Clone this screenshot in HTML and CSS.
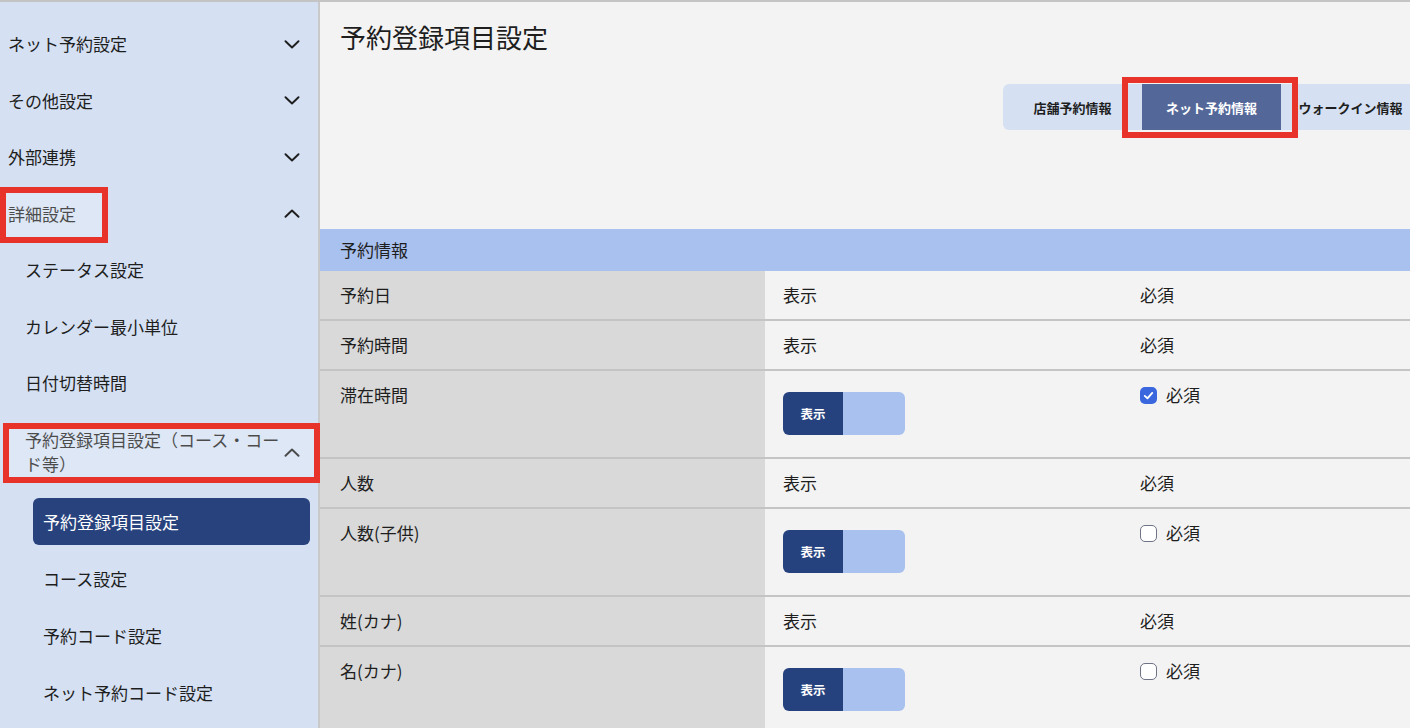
FILE: index.html
```html
<!DOCTYPE html>
<html lang="ja">
<head>
<meta charset="utf-8">
<title>予約登録項目設定</title>
<link rel="stylesheet" href="styles.css">
</head>
<body>
<div class="page">
  <aside class="sidebar">
    <div class="nav-item top"><span class="nav-text">ネット予約設定</span><svg class="chev" viewBox="0 0 16 9"><polyline points="1.5,1.2 8,7.5 14.5,1.2"/></svg></div>
    <div class="nav-item top"><span class="nav-text">その他設定</span><svg class="chev" viewBox="0 0 16 9"><polyline points="1.5,1.2 8,7.5 14.5,1.2"/></svg></div>
    <div class="nav-item top"><span class="nav-text">外部連携</span><svg class="chev" viewBox="0 0 16 9"><polyline points="1.5,1.2 8,7.5 14.5,1.2"/></svg></div>
    <div class="nav-item top"><span class="nav-text">詳細設定</span><svg class="chev" viewBox="0 0 16 9"><polyline points="1.5,7.8 8,1.5 14.5,7.8"/></svg></div>
    <div class="nav-item sub"><span class="nav-text">ステータス設定</span></div>
    <div class="nav-item sub"><span class="nav-text">カレンダー最小単位</span></div>
    <div class="nav-item sub"><span class="nav-text">日付切替時間</span></div>
    <div class="nav-item sub"><span class="nav-text">予約登録項目設定（コース・コード等）</span><svg class="chev" viewBox="0 0 16 9"><polyline points="1.5,7.8 8,1.5 14.5,7.8"/></svg></div>
    <div class="nav-leaf active">予約登録項目設定</div>
    <div class="nav-leaf">コース設定</div>
    <div class="nav-leaf">予約コード設定</div>
    <div class="nav-leaf">ネット予約コード設定</div>
  </aside>

  <main class="main">
    <h1 class="title">予約登録項目設定</h1>
    <div class="tabs-row">
      <div class="tabs">
        <div class="tab">店舗予約情報</div>
        <div class="tab active">ネット予約情報</div>
        <div class="tab">ウォークイン情報</div>
      </div>
    </div>

    <section class="panel">
      <div class="panel-head">予約情報</div>
      <div class="row">
        <div class="cell label">予約日</div>
        <div class="cell">表示</div>
        <div class="cell">必須</div>
      </div>
      <div class="row">
        <div class="cell label">予約時間</div>
        <div class="cell">表示</div>
        <div class="cell">必須</div>
      </div>
      <div class="row">
        <div class="cell label">滞在時間</div>
        <div class="cell toggle-cell"><div class="toggle"><span class="toggle-on">表示</span><span class="toggle-off"></span></div></div>
        <div class="cell"><label class="check"><span class="box checked"><svg viewBox="0 0 16 16"><polyline points="4,8.4 6.9,11 12,5.2"/></svg></span>必須</label></div>
      </div>
      <div class="row">
        <div class="cell label">人数</div>
        <div class="cell">表示</div>
        <div class="cell">必須</div>
      </div>
      <div class="row">
        <div class="cell label">人数(子供)</div>
        <div class="cell toggle-cell"><div class="toggle"><span class="toggle-on">表示</span><span class="toggle-off"></span></div></div>
        <div class="cell"><label class="check"><span class="box"></span>必須</label></div>
      </div>
      <div class="row">
        <div class="cell label">姓(カナ)</div>
        <div class="cell">表示</div>
        <div class="cell">必須</div>
      </div>
      <div class="row">
        <div class="cell label">名(カナ)</div>
        <div class="cell toggle-cell"><div class="toggle"><span class="toggle-on">表示</span><span class="toggle-off"></span></div></div>
        <div class="cell"><label class="check"><span class="box"></span>必須</label></div>
      </div>
    </section>
  </main>
</div>

<div class="mark mark-detail"></div>
<div class="mark mark-course"></div>
<div class="mark mark-tab"></div>
</body>
</html>
```

FILE: styles.css
```css
html, body {
  margin: 0;
  padding: 0;
  height: 100%;
  overflow: hidden;
}
body {
  font-family: "Noto Sans CJK JP", "Noto Sans", sans-serif;
  color: #1e1e1e;
  background: #f3f3f3;
}
.page {
  display: flex;
  height: 100%;
  border-top: 2px solid #c4c4c4;
  box-sizing: border-box;
}
.sidebar {
  width: 318px;
  flex: 0 0 318px;
  display: flex;
  flex-direction: column;
  background: #d5e1f3;
  border-right: 2px solid #c9c9c9;
  padding-top: 14px;
  overflow: hidden;
}
.nav-item {
  display: flex;
  align-items: center;
  flex: 0 0 auto;
  padding: 16px 18px 16px 8px;
  font-size: 17px;
  line-height: 24.5px;
}
.nav-item.sub {
  padding-left: 25px;
}
.nav-text {
  flex: 1;
  min-width: 0;
}
.chev {
  width: 16px;
  height: 9px;
  flex: 0 0 16px;
  fill: none;
  stroke: #1e1e1e;
  stroke-width: 1.9;
  stroke-linecap: round;
  stroke-linejoin: round;
}
.nav-leaf {
  flex: 0 0 auto;
  margin: 5px 8px 5px 33px;
  padding: 11px 10px;
  font-size: 17px;
  line-height: 25px;
  border-radius: 6px;
}
.nav-leaf.active {
  background: #27427d;
  color: #ffffff;
}

.main {
  flex: 1;
  min-width: 0;
  overflow: hidden;
  background: #f3f3f3;
}
.title {
  margin: 0;
  padding: 17px 20px 0;
  font-size: 26px;
  font-weight: 400;
  line-height: 36px;
  color: #1e1e1e;
}
.tabs-row {
  display: flex;
  justify-content: flex-end;
  margin-top: 29px;
  margin-right: -10px;
}
.tabs {
  display: flex;
  background: #d5e1f3;
  border-radius: 6px;
  overflow: hidden;
}
.tab {
  width: 139px;
  height: 46px;
  display: flex;
  align-items: center;
  justify-content: center;
  font-size: 13px;
  font-weight: 700;
  color: #1e1e1e;
}
.tab.active {
  background: #536899;
  color: #ffffff;
}

.panel {
  margin-top: 99px;
}
.panel-head {
  background: #a9c1ee;
  padding: 9px 20px;
  font-size: 17px;
  line-height: 24px;
}
.row {
  display: grid;
  grid-template-columns: 445px 357px 1fr;
  border-top: 2px solid #c4c4c4;
}
.panel-head + .row {
  border-top: none;
}
.cell {
  padding: 12px 18px;
  font-size: 17px;
  line-height: 24px;
}
.cell.label {
  background: #d9d9d9;
  padding-left: 20px;
}
.cell.toggle-cell {
  padding-top: 21px;
  padding-bottom: 22px;
}
.toggle {
  display: flex;
  width: 122px;
  height: 43px;
  border-radius: 6px;
  overflow: hidden;
}
.toggle-on {
  width: 60px;
  background: #26427e;
  color: #ffffff;
  font-size: 12.5px;
  font-weight: 700;
  display: flex;
  align-items: center;
  justify-content: center;
}
.toggle-off {
  flex: 1;
  background: #a9c1ee;
}
.check {
  display: flex;
  align-items: center;
  gap: 9px;
}
.box {
  width: 17px;
  height: 17px;
  box-sizing: border-box;
  border: 1.5px solid #6e7386;
  border-radius: 5px;
  background: #ffffff;
  display: flex;
  align-items: center;
  justify-content: center;
}
.box.checked {
  border: none;
  background: #3a66de;
}
.box svg {
  width: 15px;
  height: 15px;
  fill: none;
  stroke: #ffffff;
  stroke-width: 2;
  stroke-linecap: round;
  stroke-linejoin: round;
}

/* red annotation frames */
.mark {
  position: absolute;
  box-sizing: border-box;
  border: 6px solid #e8332a;
  background: rgba(255, 255, 255, 0.2);
  pointer-events: none;
}
.mark-detail {
  left: 0;
  top: 187px;
  width: 108px;
  height: 56px;
}
.mark-course {
  left: 3px;
  top: 423px;
  width: 317px;
  height: 60px;
}
.mark-tab {
  left: 1122px;
  top: 77px;
  width: 176px;
  height: 61px;
  background: transparent;
}
```
